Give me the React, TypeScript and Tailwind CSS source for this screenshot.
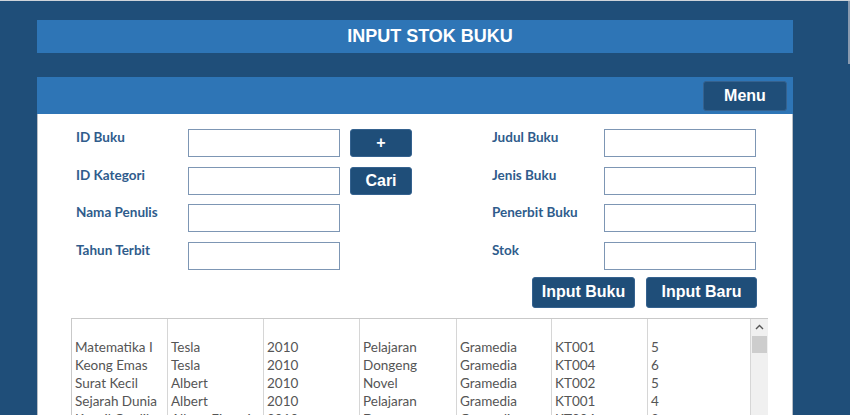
import React from "react";

const rows = [
  ["Matematika I", "Tesla", "2010", "Pelajaran", "Gramedia", "KT001", "5"],
  ["Keong Emas", "Tesla", "2010", "Dongeng", "Gramedia", "KT004", "6"],
  ["Surat Kecil", "Albert", "2010", "Novel", "Gramedia", "KT002", "5"],
  ["Sejarah Dunia", "Albert", "2010", "Pelajaran", "Gramedia", "KT001", "4"],
  ["Kancil Cerdik", "Albert Einstein", "2010", "Dongeng", "Gramedia", "KT004", "3"],
];

const colW = ["w-[96px]", "w-[96px]", "w-[96px]", "w-[97px]", "w-[95px]", "w-[96px]", "w-[103px]"];

const arial = { fontFamily: '"Liberation Sans", Arial, sans-serif' };

function Label({ children }: { children: React.ReactNode }) {
  return (
    <div className="w-[112px] h-[28px] text-[13.5px] leading-[16px] font-bold text-[#2f5c8c] font-['Lato',sans-serif]">
      {children}
    </div>
  );
}

function Input() {
  return <div className="w-[152px] h-[28px] border border-[#7d96b4] bg-white" />;
}

function Btn({ children, w, h }: { children: React.ReactNode; w: string; h: string }) {
  return (
    <div
      className={`${w} ${h} flex items-center justify-center rounded-[3px] bg-[#1f4e79] border border-[#35628f] text-white font-bold text-[16px] font-['Liberation_Sans',Arial,sans-serif]`}
    >
      {children}
    </div>
  );
}

export default function App() {
  return (
    <div className="relative w-[850px] h-[415px] overflow-hidden bg-[#1f4e79] border-t border-[#cfd4da] flex flex-col">
      <div className="absolute right-0 top-0 w-[2px] h-[63px] bg-[#8a9bb0]" />
      <div className="ml-[37px] w-[756px] flex flex-col flex-1 min-h-0">
        <div className="mt-[19px] h-[33px] bg-[#2e75b6] flex items-center justify-center pl-[30px]">
          <span className="text-white font-bold text-[18px] font-['Liberation_Sans',Arial,sans-serif]">
            INPUT STOK BUKU
          </span>
        </div>
        <div className="mt-[24px] h-[37px] bg-[#2e75b6] flex items-start justify-end pt-[4px] pr-[6px]">
          <Btn w="w-[84px]" h="h-[30px]">Menu</Btn>
        </div>
        <div className="flex-1 min-h-0 bg-white border-l border-r border-[#b8bec6] pt-[15px] flex flex-col">
          <div className="flex pl-[38px]">
            <div className="flex flex-col gap-[9.5px]">
              <div className="flex">
                <Label>ID Buku</Label>
                <Input />
                <div className="ml-[10px]">
                  <Btn w="w-[62px]" h="h-[28px]">+</Btn>
                </div>
              </div>
              <div className="flex">
                <Label>ID Kategori</Label>
                <Input />
                <div className="ml-[10px]">
                  <Btn w="w-[62px]" h="h-[28px]">Cari</Btn>
                </div>
              </div>
              <div className="flex">
                <Label>Nama Penulis</Label>
                <Input />
              </div>
              <div className="flex">
                <Label>Tahun Terbit</Label>
                <Input />
              </div>
            </div>
            <div className="ml-[80px] flex flex-col">
              <div className="flex flex-col gap-[9.5px]">
                <div className="flex">
                  <Label>Judul Buku</Label>
                  <Input />
                </div>
                <div className="flex">
                  <Label>Jenis Buku</Label>
                  <Input />
                </div>
                <div className="flex">
                  <Label>Penerbit Buku</Label>
                  <Input />
                </div>
                <div className="flex">
                  <Label>Stok</Label>
                  <Input />
                </div>
              </div>
              <div className="flex justify-end gap-[11px] mt-[7px] mr-[-1px] ml-[-72px]">
                <Btn w="w-[103px]" h="h-[31px]">Input Buku</Btn>
                <Btn w="w-[111px]" h="h-[31px]">Input Baru</Btn>
              </div>
            </div>
          </div>
          <div className="ml-[33px] mt-[10px] w-[697px] flex-1 border border-[#c9c9c9] flex font-['Lato',sans-serif] text-[13.5px] text-[#555555]">
            {colW.map((w, ci) => (
              <div key={ci} className={`${w} border-r border-[#d6d6d6] flex flex-col shrink-0`}>
                <div className="h-[19px]" />
                {rows.map((r, ri) => (
                  <div key={ri} className="h-[18px] leading-[18px] pl-[3px] whitespace-nowrap overflow-hidden">
                    {r[ci]}
                  </div>
                ))}
              </div>
            ))}
            <div className="w-[17px] bg-[#f0f0f0] flex flex-col items-center shrink-0">
              <svg width="9" height="6" viewBox="0 0 9 6" className="mt-[5px]">
                <polyline points="1,5 4.5,1.5 8,5" fill="none" stroke="#555" strokeWidth="1.4" />
              </svg>
              <div className="mt-[6px] w-[15px] h-[17px] bg-[#cdcdcd]" />
            </div>
          </div>
        </div>
      </div>
    </div>
  );
}
